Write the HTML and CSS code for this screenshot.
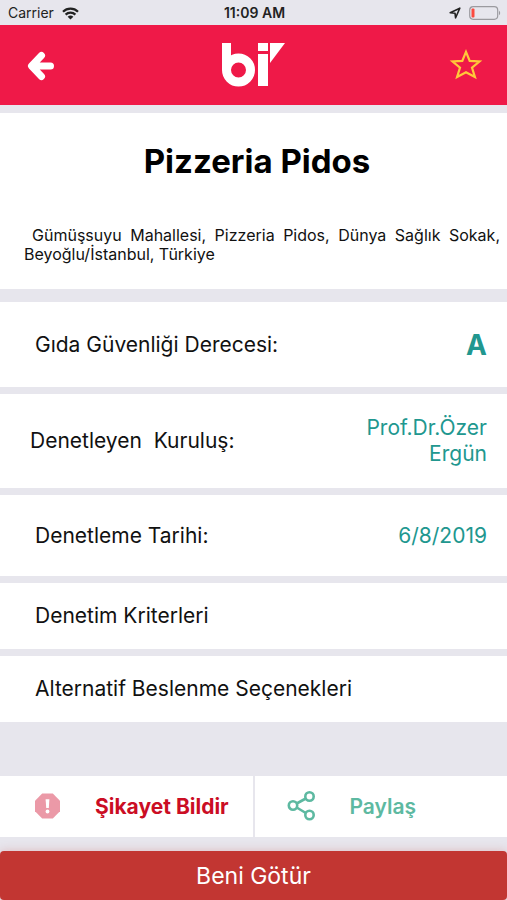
FILE: index.html
```html
<!DOCTYPE html>
<html lang="tr">
<head>
<meta charset="utf-8">
<meta name="viewport" content="width=device-width, initial-scale=1">
<title>Pizzeria Pidos</title>
<link rel="stylesheet" href="styles.css">
</head>
<body>
<div class="status">
  <div class="status-left">
    <span>Carrier</span>
    <svg class="wifi" viewBox="0 0 17 13" aria-hidden="true"><path d="M1 4.800a10.600 10.600 0 0 1 15 0M3.600 7.600a7 7 0 0 1 9.800 0" fill="none" stroke="currentColor" stroke-width="2.200"/><path d="M5.600 9.800a4.200 4.200 0 0 1 5.800 0L8.500 12.600z" fill="currentColor"/></svg>
  </div>
  <span class="clock">11:09 AM</span>
  <div class="status-right">
    <svg class="location" viewBox="0 0 12 12" aria-hidden="true"><path d="M1.200 5.800 10.800 1.200 6.600 10.800 6 6.200z" fill="none" stroke="currentColor" stroke-width="1.600" stroke-linejoin="round"/></svg>
    <svg class="battery" viewBox="0 0 32 14" aria-hidden="true"><rect x=".7" y=".7" width="28" height="12.600" rx="3.500" fill="none" stroke="#9b9a9f" stroke-width="1.200"/><rect x="2.500" y="2.500" width="3" height="9" rx="1" fill="#fb4b40"/><path d="M30 4.800a2.600 2.600 0 0 1 0 4.400z" fill="#9b9a9f"/></svg>
  </div>
</div>
<header class="bar">
  <button class="icon-button" type="button" aria-label="Geri">
    <svg class="back" viewBox="0 0 30 32" aria-hidden="true"><path d="M16.500 6.500 6.500 17 16.500 27.500M8 17H25.500" fill="none" stroke="#fff" stroke-width="7" stroke-linecap="round" stroke-linejoin="round"/></svg>
  </button>
  <svg class="logo" viewBox="0 0 64 44" role="img" aria-label="bi"><rect x="1" y="0" width="9" height="27" fill="#fff"/><circle cx="17.500" cy="27" r="12" fill="none" stroke="#fff" stroke-width="9"/><rect x="37" y="0" width="10" height="8" fill="#fff"/><rect x="37" y="11" width="10" height="32" fill="#fff"/><path d="M49 0H64L49 20z" fill="#fff"/></svg>
  <button class="icon-button" type="button" aria-label="Favorilere ekle">
    <svg class="star" viewBox="0 0 32 32" aria-hidden="true"><path d="M16 2.800 19.700 11.900 29.500 12.500 22 18.700 24.900 28 16 23.200 7.100 28 10 18.700 2.500 12.500 12.300 11.900z" fill="none" stroke="#ffc83a" stroke-width="2.200"/></svg>
  </button>
</header>
<main>
  <section class="place">
    <h1>Pizzeria Pidos</h1>
    <p>Gümüşsuyu Mahallesi, Pizzeria Pidos, Dünya Sağlık Sokak, Beyoğlu/İstanbul, Türkiye</p>
  </section>
  <dl class="facts">
    <div class="row row-grade"><dt>Gıda Güvenliği Derecesi:</dt><dd class="grade">A</dd></div>
    <div class="row row-wide"><dt>Denetleyen&nbsp; Kuruluş:</dt><dd>Prof.Dr.Özer<br>Ergün</dd></div>
    <div class="row"><dt>Denetleme Tarihi:</dt><dd>6/8/2019</dd></div>
  </dl>
  <nav class="links">
    <a href="#kriterler">Denetim Kriterleri</a>
    <a href="#beslenme">Alternatif Beslenme Seçenekleri</a>
  </nav>
</main>
<footer>
  <div class="actions">
    <button class="action report" type="button">
      <svg viewBox="0 0 30 30" aria-hidden="true"><path d="M10.200 1.500H20.800L28 8.700V19.300L20.800 26.500H10.200L3 19.300V8.700z" fill="#eb99a7"/><path d="M13.600 7.200h3.800l-.6 8.800h-2.600z" fill="#fff"/><circle cx="15.500" cy="19.500" r="1.900" fill="#fff"/></svg>
      <span>Şikayet Bildir</span>
    </button>
    <button class="action share" type="button">
      <svg viewBox="0 0 30 30" aria-hidden="true"><g fill="none" stroke="#5db9a1" stroke-width="2.600"><circle cx="6" cy="13.500" r="4.200"/><circle cx="22.500" cy="4.500" r="4.200"/><circle cx="22.500" cy="23" r="4.200"/><path d="M9.700 11.500 18.800 6.500M9.700 15.500 18.800 21"/></g></svg>
      <span>Paylaş</span>
    </button>
  </div>
  <button class="go" type="button">Beni Götür</button>
</footer>
</body>
</html>
```
FILE: styles.css
```css
* { box-sizing: border-box; }
body {
  margin: 0;
  min-height: 100vh;
  display: flex;
  flex-direction: column;
  background: #e7e6ed;
  color: #111;
  font-family: Inter, "Liberation Sans", sans-serif;
  font-size: 21px;
  line-height: 26px;
}
button { border: 0; padding: 0; font: inherit; cursor: pointer; }
svg { display: block; flex: none; overflow: visible; }

.status {
  display: grid;
  grid-template-columns: 1fr auto 1fr;
  align-items: center;
  padding: 3px 6px 2px 8px;
  font-size: 14px;
  line-height: 20px;
  color: #222;
}
.status-left, .status-right { display: flex; align-items: center; gap: 8px; }
.status-right { justify-content: flex-end; }
.clock { font-weight: 600; }
.wifi { width: 17px; height: 13px; }
.location { width: 12px; height: 12px; }
.battery { width: 32px; height: 14px; }

.bar {
  display: flex;
  align-items: center;
  justify-content: space-between;
  height: 80px;
  padding: 0 25px;
  background: #ef1948;
}
.icon-button { background: none; }
.back { width: 30px; height: 32px; }
.logo { width: 64px; height: 44px; }
.star { width: 32px; height: 32px; }

.place {
  margin-top: 8px;
  padding: 28px 7px 25px 24px;
  background: #fff;
}
h1 {
  margin: 0 0 45px;
  padding-right: 10px;
  text-align: center;
  font-size: 33px;
  line-height: 40px;
  font-weight: 700;
  color: #000;
}
.place p {
  margin: 0;
  text-align: justify;
  text-indent: 8px;
  font-size: 16px;
  line-height: 19px;
}

.facts { display: grid; gap: 7px; margin: 13px 0 7px; }
.row {
  display: flex;
  align-items: center;
  justify-content: space-between;
  min-height: 81px;
  padding: 14px 20px 14px 35px;
  background: #fff;
}
.row-grade { min-height: 85px; }
.row-wide { min-height: 94px; padding-left: 30px; }
dd { margin: 0; text-align: right; color: #21978f; }
.grade { font-size: 28px; font-weight: 700; }

.links { display: grid; gap: 7px; }
.links a {
  padding: 20px 35px;
  background: #fff;
  color: inherit;
  text-decoration: none;
}

footer { margin-top: auto; }
.actions {
  display: grid;
  grid-template-columns: 1fr 1fr;
  gap: 2px;
}
.action {
  display: flex;
  align-items: center;
  gap: 33px;
  height: 61px;
  padding-left: 32px;
  background: #fff;
  font-weight: 600;
  white-space: nowrap;
}
.action svg { width: 30px; height: 30px; }
.report { color: #cb0d24; font-weight: 700; }
.share { color: #5db9a1; }
.go {
  display: block;
  width: 100%;
  height: 49px;
  margin-top: 14px;
  border-radius: 4px;
  background: #c23632;
  box-shadow: 0 0 10px #c2363240;
  color: #fff;
  font-size: 23px;
  line-height: 28px;
}
```
